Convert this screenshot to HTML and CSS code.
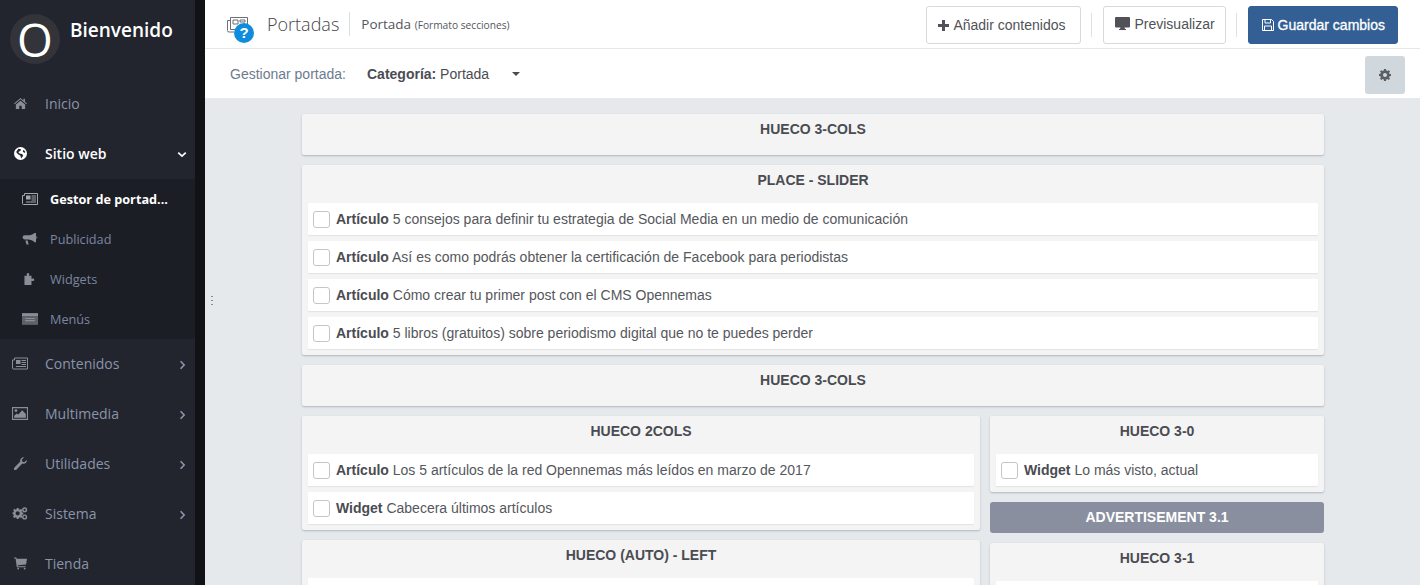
FILE: index.html
```html
<!DOCTYPE html>
<html lang="es">
<head>
<meta charset="utf-8">
<title>Portadas</title>
<link rel="stylesheet" href="styles.css">
</head>
<body>
<svg class="defs" width="0" height="0" aria-hidden="true">
  <symbol id="i-news" viewBox="0 0 16 12"><path fill="none" stroke="currentColor" d="M2.5.5h13v11H1.500a1 1 0 0 1-1-1V2.500h2z"/><path fill="currentColor" d="M4 2.500h4.500v4H4zM9.500 2.500H14v1H9.500zM9.500 4.500H14v1H9.500zM9.500 6.500H14v1H9.500zM4 8.500h10v1H4z"/></symbol>
  <symbol id="i-right" viewBox="0 0 8 12"><path fill="none" stroke="currentColor" stroke-width="2" d="M1.700 1.500 6 6l-4.300 4.500"/></symbol>
</svg>
<div class="app">
  <aside class="sidebar">
    <div class="brand">
      <div class="logo">O</div>
      <div class="welcome">Bienvenido</div>
    </div>
    <nav>
      <a class="nav-item"><svg class="nav-icon" viewBox="0 0 14 12"><path fill="currentColor" d="M7 0 0 6l.7.800L7 1.500l6.300 5.300.7-.8-2.200-1.900V1h-1.600v1.700zM2 7.200 7 3l5 4.200V12H8.300V8.500H5.700V12H2z"/></svg><span>Inicio</span></a>
      <a class="nav-item open"><svg class="nav-icon" viewBox="0 0 12 12"><circle cx="6" cy="6" r="6" fill="currentColor"/><path fill="#22252e" d="M4 1.500 6.500 2 6 3.500 4 4.500l1 1.500 2.500.5 1 1.500-2 2.500L6 8 3.500 6.500 2 4.500zM9 2.500l1.500 2-1 1L8 4z"/></svg><span>Sitio web</span><svg class="chevron-down" viewBox="0 0 12 8"><path fill="none" stroke="currentColor" stroke-width="2" d="M1.500 1.700 6 6l4.500-4.300"/></svg></a>
      <div class="subnav">
        <a class="sub-item active"><svg class="sub-icon"><use href="#i-news"/></svg><span>Gestor de portad...</span></a>
        <a class="sub-item"><svg class="sub-icon" viewBox="0 0 16 13"><path fill="currentColor" d="M13 0h1.500v10H13c-2-2-4.500-3-7-3H2.500C1 7 0 6 0 4.700S1 2.500 2.500 2.500H6C8.500 2.500 11 1.700 13 0zM3 8h2.500l1 4.500H4.200z"/><path fill="currentColor" d="M15 3.500c.6.300 1 .8 1 1.500s-.4 1.200-1 1.500z"/></svg><span>Publicidad</span></a>
        <a class="sub-item"><svg class="sub-icon" viewBox="0 0 14 13"><path fill="currentColor" d="M1 3h2.500c.5 0 .3-.7 0-1C3.200 1.500 3.300 0 4.800 0s1.600 1.500 1.300 2c-.3.300-.5 1 0 1h2.500v3c0 .5.700.3 1 0 .5-.3 2-.2 2 1.300s-1.500 1.600-2 1.300c-.3-.3-1-.5-1 0V13H1z"/></svg><span>Widgets</span></a>
        <a class="sub-item"><svg class="sub-icon" viewBox="0 0 15 11"><path fill="currentColor" d="M0 0h15v3H0z"/><path fill="currentColor" fill-opacity=".6" d="M0 3h15v8H0z"/><path fill="currentColor" d="M3 4.500h9v1H3zM3 6.500h9v1H3z"/></svg><span>Menús</span></a>
      </div>
      <a class="nav-item"><svg class="nav-icon wide"><use href="#i-news"/></svg><span>Contenidos</span><svg class="chevron"><use href="#i-right"/></svg></a>
      <a class="nav-item"><svg class="nav-icon wide" viewBox="0 0 15 12"><path fill="currentColor" fill-rule="evenodd" d="M0 0h15v12H0zM1 1v10h13V1zM2 10V8l2.500-2L6 7l3.500-4L13 6.500V10z"/><circle cx="3.700" cy="3.200" r="1.300" fill="currentColor"/></svg><span>Multimedia</span><svg class="chevron"><use href="#i-right"/></svg></a>
      <a class="nav-item"><svg class="nav-icon" viewBox="0 0 13 13"><path fill="currentColor" d="M12.800 3c.4 2-1.500 4.400-4.500 3.500L2.600 12.400c-.8.800-1.900.7-2.300.3-.6-.6-.5-1.600.2-2.300l5.800-5.800C5.500 2 8 0 10.200.3L7.800 2.700l.5 2 2 .5z"/></svg><span>Utilidades</span><svg class="chevron"><use href="#i-right"/></svg></a>
      <a class="nav-item"><svg class="nav-icon wide" viewBox="0 0 16 14"><path fill="currentColor" fill-rule="evenodd" d="M4.500 3h2l.3 1.300 1.200.6L9.200 4l1.400 1.400-.9 1.200.5 1.200 1.300.2v2l-1.300.3-.5 1.200.9 1.100-1.400 1.400-1.200-.9-1.200.5-.3 1.300h-2l-.2-1.300-1.200-.5-1.200.9L.5 12.100l.9-1.100-.5-1.200L0 9.800v-2l1-.2.500-1.200-.9-1.200L2 4l1.200.9 1.100-.6zm1 3.500a2.300 2.300 0 1 0 0 4.600 2.300 2.300 0 0 0 0-4.600z" transform="translate(0 -2)"/><circle cx="13" cy="3" r="2" fill="none" stroke="currentColor" stroke-width="1.500"/><circle cx="13" cy="10.800" r="2" fill="none" stroke="currentColor" stroke-width="1.500"/></svg><span>Sistema</span><svg class="chevron"><use href="#i-right"/></svg></a>
      <a class="nav-item"><svg class="nav-icon" viewBox="0 0 14 13"><path fill="currentColor" d="M0 0h2.500l.5 1.500h11L13 7.500 4 8.500l.3 1H12.500v1H3L1.700 1.200H0z"/><circle cx="4.500" cy="12" r="1" fill="currentColor"/><circle cx="11.500" cy="12" r="1" fill="currentColor"/></svg><span>Tienda</span></a>
    </nav>
  </aside>

  <div class="page">
    <header class="topbar">
      <div class="title-group">
        <div class="page-icon">
          <svg class="page-glyph" viewBox="0 0 21 16"><path fill="none" stroke="currentColor" d="M3.500.5h17v12h-17zM.5 3.500h3M.5 3.500v10a1.500 1.500 0 0 0 1.500 1.500h5"/><path fill="none" stroke="currentColor" d="M6 3h5v4H6zM13 3h5v2h-5z"/></svg>
          <span class="help">?</span>
        </div>
        <h1 class="page-title">Portadas</h1>
        <div class="page-sub">Portada <small>(Formato secciones)</small></div>
      </div>
      <div class="actions">
        <button class="btn add"><svg class="btn-icon" viewBox="0 0 11 11"><path fill="currentColor" d="M4 0h3v4h4v3H7v4H4V7H0V4h4z"/></svg>Añadir contenidos</button>
        <span class="vsep"></span>
        <button class="btn preview"><svg class="btn-icon large" viewBox="0 0 15 13"><path fill="currentColor" d="M1 0h13a1 1 0 0 1 1 1v8.500a1 1 0 0 1-1 1H9.500l.5 1.500h1v1H4v-1h1l.5-1.500H1a1 1 0 0 1-1-1V1a1 1 0 0 1 1-1z"/></svg>Previsualizar</button>
        <span class="vsep"></span>
        <button class="btn primary"><svg class="btn-icon" viewBox="0 0 12 12"><path fill="none" stroke="currentColor" d="M.5.500h9l2 2v9H.5z"/><path fill="none" stroke="currentColor" d="M3 .5v3.500h5.500V.5M2.500 11.500V7h7v4.500"/></svg>Guardar cambios</button>
      </div>
    </header>
    <div class="toolbar">
      <span class="manage">Gestionar portada:</span>
      <span class="category"><b>Categoría:</b> Portada</span>
      <span class="caret"></span>
      <button class="gear-btn"><svg class="gear" viewBox="0 0 12 12"><path fill="currentColor" fill-rule="evenodd" d="M5 0h2l.3 1.600 1.100.5L9.800 1.200l1.200 1.200-.9 1.400.5 1.100L12 5v2l-1.400.3-.5 1.100.9 1.400-1.200 1.200-1.400-.9-1.100.5L7 12H5l-.3-1.400-1.100-.5-1.400.9L1 9.800l.9-1.400-.5-1.100L0 7V5l1.400-.3.500-1.100L1 2.400l1.200-1.200 1.400.9 1.100-.5zM6 4a2 2 0 1 0 0 4 2 2 0 0 0 0-4z"/></svg></button>
    </div>
    <main class="board">
      <span class="grip"></span>
      <div class="board-inner">
        <section class="slot"><h2>HUECO 3-COLS</h2></section>
        <section class="slot">
          <h2>PLACE - SLIDER</h2>
          <div class="item"><span class="check"></span><span><b>Artículo</b> 5 consejos para definir tu estrategia de Social Media en un medio de comunicación</span></div>
          <div class="item"><span class="check"></span><span><b>Artículo</b> Así es como podrás obtener la certificación de Facebook para periodistas</span></div>
          <div class="item"><span class="check"></span><span><b>Artículo</b> Cómo crear tu primer post con el CMS Opennemas</span></div>
          <div class="item"><span class="check"></span><span><b>Artículo</b> 5 libros (gratuitos) sobre periodismo digital que no te puedes perder</span></div>
        </section>
        <section class="slot"><h2>HUECO 3-COLS</h2></section>
        <div class="columns">
          <div class="column">
            <section class="slot">
              <h2>HUECO 2COLS</h2>
              <div class="item"><span class="check"></span><span><b>Artículo</b> Los 5 artículos de la red Opennemas más leídos en marzo de 2017</span></div>
              <div class="item"><span class="check"></span><span><b>Widget</b> Cabecera últimos artículos</span></div>
            </section>
            <section class="slot">
              <h2>HUECO (AUTO) - LEFT</h2>
              <div class="item"></div>
            </section>
          </div>
          <div class="column">
            <section class="slot">
              <h2>HUECO 3-0</h2>
              <div class="item"><span class="check"></span><span><b>Widget</b> Lo más visto, actual</span></div>
            </section>
            <section class="slot ad"><h2>ADVERTISEMENT 3.1</h2></section>
            <section class="slot">
              <h2>HUECO 3-1</h2>
              <div class="item"></div>
            </section>
          </div>
        </div>
      </div>
    </main>
  </div>
</div>
</body>
</html>
```

FILE: styles.css
```css
* { box-sizing: border-box; }
html, body { margin: 0; height: 585px; overflow: hidden; }
body { font-family: "Liberation Sans", Arial, sans-serif; font-size: 14px; color: #55575c; background: #e5e9ec; }
.defs { position: absolute; }
.app { display: flex; height: 585px; }

.sidebar { width: 205px; flex: none; background: #22252e; border-right: 10px solid #111216; font-family: "Open Sans", sans-serif; overflow: hidden; }
.brand { height: 79px; display: flex; padding: 14px 0 0 10px; gap: 10px; }
.logo { width: 50px; height: 50px; border-radius: 50%; background: #33343a; color: #fff; font-size: 46px; line-height: 50px; text-align: center; font-family: "Open Sans", sans-serif; }
.welcome { color: #fff; font-size: 19px; font-weight: 600; line-height: 24px; margin-top: 4px; }
.nav-item { height: 50px; display: flex; align-items: center; padding: 0 9px 2px 0; color: #8a94aa; font-size: 14px; position: relative; }
.nav-item > span { position: absolute; left: 45px; top: 15px; }
.nav-icon { width: 13px; height: 13px; margin-left: 14px; color: #8a8e96; }
.nav-icon.wide { width: 16px; height: 13px; margin-left: 12px; }
.open { color: #fff; font-weight: 600; }
.open .nav-icon { color: #fff; }
.chevron { width: 7px; height: 10px; margin-left: auto; margin-top: 3px; color: #8a94aa; }
.chevron-down { width: 10px; height: 7px; margin-left: auto; margin-right: -1px; margin-top: 3px; color: #fff; }
.subnav { background: #1b1e25; height: 160px; }
.sub-item { height: 40px; display: flex; align-items: center; color: #7c86a0; font-size: 12.7px; gap: 12px; padding-left: 22px; }
.sub-icon { width: 16px; height: 12px; color: #8a8e96; flex: none; }
.active { color: #fff; font-weight: 700; }
.active .sub-icon { color: #a4a7ad; }

.page { flex: 1; min-width: 0; display: flex; flex-direction: column; }
.topbar { height: 49px; flex: none; background: #fff; border-bottom: 1px solid #e5e8ea; display: flex; align-items: center; justify-content: space-between; padding: 2px 22px 0 22px; }
.title-group { display: flex; align-items: center; margin-top: -2px; }
.page-icon { position: relative; width: 28px; height: 30px; margin-right: 12px; }
.page-glyph { position: absolute; left: 0; top: 8px; width: 21px; height: 16px; color: #6c6f75; }
.help { position: absolute; left: 7px; top: 14px; width: 20px; height: 20px; border-radius: 50%; background: #0f8ddc; color: #fff; font-weight: 700; font-size: 15px; line-height: 20px; text-align: center; }
.page-title { margin: 0; font-family: "Open Sans", sans-serif; font-weight: 300; font-size: 18px; line-height: 24px; color: #44464c; padding-right: 10px; border-right: 1px solid #dcdfe2; }
.page-sub { font-family: "Open Sans", sans-serif; font-size: 13.5px; color: #54565c; margin-left: 11px; }
.page-sub small { font-size: 10.2px; }
.actions { display: flex; align-items: center; gap: 10px; }
.btn { height: 38px; border: 1px solid #d7dadd; border-radius: 3px; background: #fff; color: #505257; font: 14px "Liberation Sans", Arial, sans-serif; padding: 0 12px; display: flex; align-items: center; gap: 4px; }
.add { padding: 0 15px 0 11px; }
.preview { padding: 0 10px 3px 11px; }
.primary { background: #345f94; border-color: #345f94; color: #fff; -webkit-text-stroke: .3px #fff; padding: 0 12px 0 13px; }
.primary .btn-icon { width: 12px; height: 12px; }
.btn-icon { width: 11px; height: 11px; flex: none; }
.btn-icon.large { width: 15px; height: 13px; }
.vsep { width: 1px; height: 24px; background: #dfe2e4; margin-right: 1px; }

.toolbar { height: 49px; flex: none; background: #fff; display: flex; align-items: center; padding: 1px 15px 0 25px; position: relative; }
.manage { color: #6e7b8e; width: 137px; flex: none; }
.category { color: #4a4c52; }
.caret { width: 0; height: 0; border: 4px solid transparent; border-top-color: #4a4c52; border-bottom: 0; margin-left: 23px; }
.gear-btn { margin-left: auto; margin-top: 1px; width: 40px; height: 38px; border: 0; border-radius: 3px; background: #d0d8dd; padding: 0; display: flex; align-items: center; justify-content: center; }
.gear { width: 12px; height: 12px; color: #5c6064; }

.board { flex: 1; min-height: 0; padding: 16px 96px 0 97px; position: relative; overflow: hidden; }
.grip { position: absolute; left: 6px; top: 198px; width: 2px; height: 11px; background: repeating-linear-gradient(#8a8e94 0 1px, transparent 1px 4px); }
.board-inner { display: flex; flex-direction: column; gap: 10px; }
.slot { background: #f4f4f4; border-radius: 2px; box-shadow: 0 1px 2px rgba(110,120,130,.45); padding: 0 6px 6px; min-height: 41px; }
.slot h2 { margin: 0 0 6px; height: 32px; padding-top: 7px; font-size: 14px; line-height: 16px; font-weight: 700; text-align: center; color: #4a4c52; }
.slot > h2:last-child { margin-bottom: 0; }
.item { height: 32px; background: #fff; box-shadow: 0 1px 1px rgba(120,130,140,.15); display: flex; align-items: center; padding-left: 5px; margin-bottom: 6px; border-radius: 1px; }
.item:last-child { margin-bottom: 0; }
.item b { color: #4a4c52; }
.check { width: 17px; height: 17px; border: 1px solid #c3c5c8; border-radius: 3px; background: #fff; margin-right: 6px; flex: none; }
.columns { display: grid; grid-template-columns: 678px 334px; gap: 10px; }
.column { display: flex; flex-direction: column; gap: 10px; }
.ad { background: #8a8fa0; min-height: 31px; padding: 0; border-radius: 3px; box-shadow: none; }
.ad h2 { color: #fff; height: 31px; padding-top: 7px; }
```
